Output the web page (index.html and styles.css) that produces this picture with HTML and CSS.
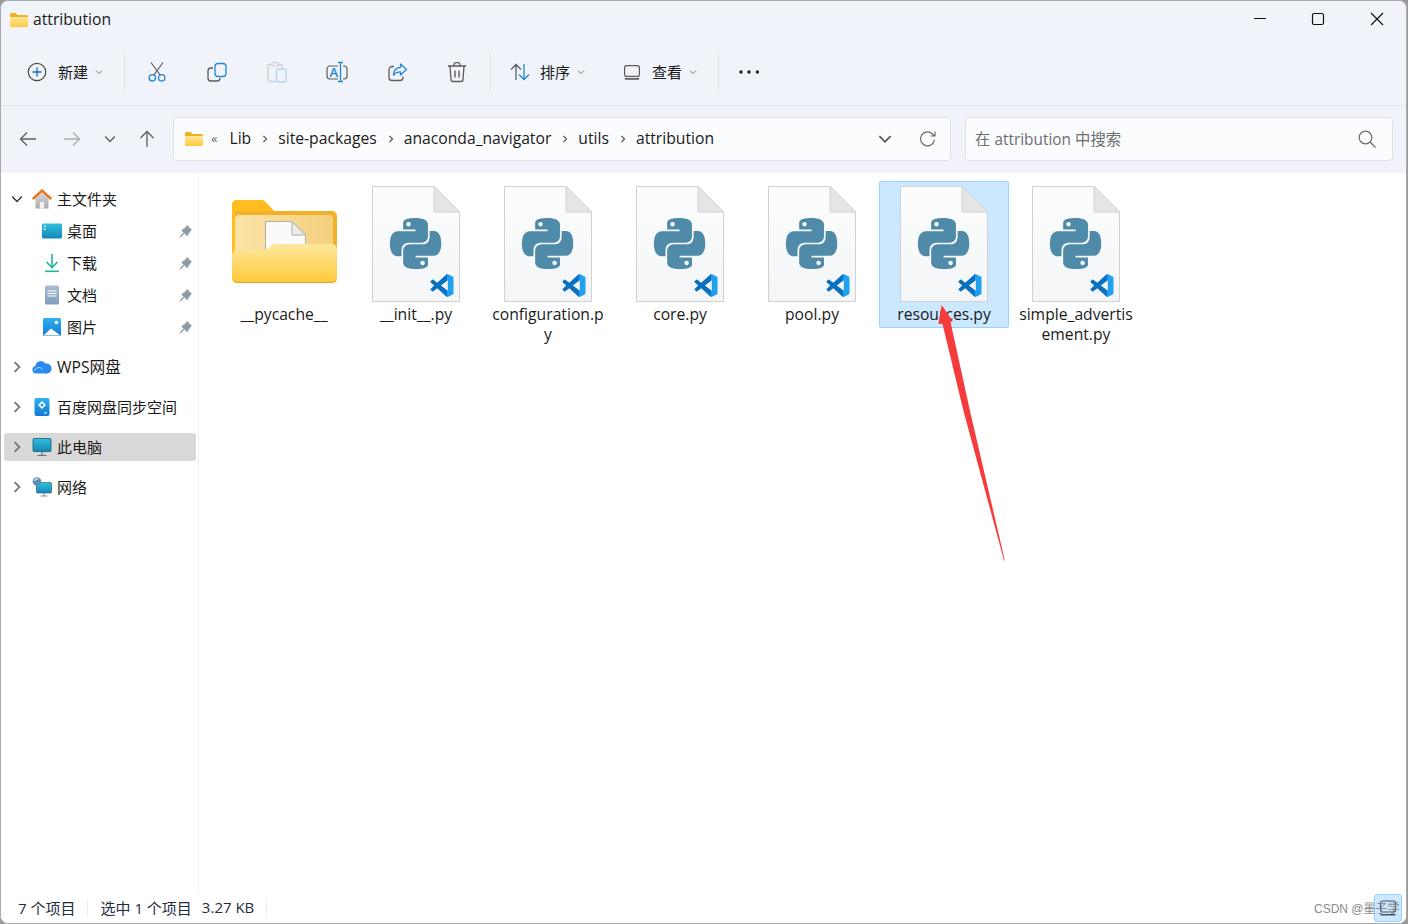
FILE: index.html
```html
<!DOCTYPE html>
<html lang="zh-CN">
<head>
<meta charset="utf-8">
<title>attribution</title>
<link rel="stylesheet" href="styles.css">
</head>
<body>
<svg class="defs" width="0" height="0" aria-hidden="true">
  <defs>
    <linearGradient id="fold-front" x1="0" y1="0" x2="0" y2="1"><stop offset="0" stop-color="#fde79f"/><stop offset="1" stop-color="#ffc937"/></linearGradient>
    <linearGradient id="fold-inner" x1="0" y1="0" x2="1" y2="0"><stop offset="0" stop-color="#fbe3a8"/><stop offset="1" stop-color="#f3d07e"/></linearGradient>
    <linearGradient id="page" x1="0" y1="0" x2="0" y2="1"><stop offset="0" stop-color="#fdfdfd"/><stop offset="1" stop-color="#f3f5f6"/></linearGradient>
    <linearGradient id="vs" x1="0" y1="0" x2="1" y2="0"><stop offset="0" stop-color="#0a6fbc"/><stop offset="0.7" stop-color="#0a72c2"/><stop offset="0.7" stop-color="#1f9ceb"/><stop offset="1" stop-color="#22a5f0"/></linearGradient>
    <linearGradient id="tealg" x1="0" y1="0" x2="0" y2="1"><stop offset="0" stop-color="#2fc0dd"/><stop offset="1" stop-color="#1488b8"/></linearGradient>
    <linearGradient id="blueg" x1="0" y1="0" x2="0" y2="1"><stop offset="0" stop-color="#2db2ef"/><stop offset="1" stop-color="#1279d6"/></linearGradient>
    <linearGradient id="docg" x1="0" y1="0" x2="0" y2="1"><stop offset="0" stop-color="#a9bed6"/><stop offset="1" stop-color="#7f9cc0"/></linearGradient>
    <linearGradient id="homeg" x1="0" y1="0" x2="0" y2="1"><stop offset="0" stop-color="#dcdcdc"/><stop offset="1" stop-color="#a9a9a9"/></linearGradient>
    <symbol id="chev-r" viewBox="0 0 10 10"><path d="M3 1l4 4-4 4" fill="none" stroke="currentColor" stroke-width="1.500"/></symbol>
    <symbol id="chev-d" viewBox="0 0 10 10"><path d="M1 3l4 4 4-4" fill="none" stroke="currentColor" stroke-width="1.200"/></symbol>
    <symbol id="pin" viewBox="0 0 14 14"><path d="M8 1l5 5-1.500 1-1.700 2.500-.3 1.500L8 12 2.500 6.500 3.500 5 5 4.700l2-2.200z" fill="#8f9ba5"/><path d="M1 13l4.500-4.500" stroke="#8f9ba5" stroke-width="1.300"/></symbol>
    <symbol id="mini-folder" viewBox="0 0 18 14"><path d="M0 1.500A1.500 1.500 0 0 1 1.500 0h4L7.500 2H16.500A1.500 1.500 0 0 1 18 3.500V5H0z" fill="#f6b01e"/><path d="M0 4h18v8.500a1.500 1.500 0 0 1-1.500 1.500h-15A1.500 1.500 0 0 1 0 12.500z" fill="url(#fold-front)"/></symbol>
    <symbol id="py-file" viewBox="0 0 88 116">
      <path d="M.5.500H62L87.500 26V115.500H.5z" fill="url(#page)" stroke="#cfd2d4"/>
      <path d="M62 .5L87.500 26H62z" fill="#e4e5e6" stroke="#cfd2d4"/>
      <g transform="translate(18 32) scale(2.130)"><path fill="#4f8aa8" fill-rule="evenodd" d="M14.250.18l.9.2.73.26.59.3.45.32.34.34.25.34.16.33.1.3.04.26.02.2-.01.13V8.500l-.05.63-.13.55-.21.46-.26.38-.3.31-.33.25-.35.19-.35.14-.33.1-.3.07-.26.04-.21.02H8.770l-.69.05-.59.14-.5.22-.41.27-.33.32-.27.35-.2.36-.15.37-.1.35-.07.32-.04.27-.02.21v3.060H3.170l-.21-.03-.28-.07-.32-.12-.35-.18-.36-.26-.36-.36-.35-.46-.32-.59-.28-.73-.21-.88-.14-1.050-.05-1.230.06-1.220.16-1.040.24-.87.32-.71.36-.57.4-.44.42-.33.42-.24.4-.16.36-.1.32-.05.24-.01h.16l.06.01h8.160v-.83H6.180l-.01-2.750-.02-.37.05-.34.11-.31.17-.28.25-.26.31-.23.38-.2.44-.18.51-.15.58-.12.64-.1.71-.06.77-.04.84-.02 1.270.05zm-6.300 1.980l-.23.33-.08.41.08.41.23.34.33.22.41.09.41-.09.33-.22.23-.34.08-.41-.08-.41-.23-.33-.33-.22-.41-.09-.41.09zm13.090 3.950l.28.06.32.12.35.18.36.27.36.35.35.47.32.59.28.73.21.88.14 1.040.05 1.230-.06 1.230-.16 1.040-.24.86-.32.71-.36.57-.4.45-.42.33-.42.24-.4.16-.36.09-.32.05-.24.02-.16-.01h-8.220v.82h5.840l.01 2.760.02.36-.05.34-.11.31-.17.29-.25.25-.31.24-.38.2-.44.17-.51.15-.58.13-.64.09-.71.07-.77.04-.84.01-1.270-.04-1.070-.14-.9-.2-.73-.25-.59-.3-.45-.33-.34-.34-.25-.34-.16-.33-.1-.3-.04-.25-.02-.2.01-.13v-5.340l.05-.64.13-.54.21-.46.26-.38.3-.32.33-.24.35-.2.35-.14.33-.1.3-.06.26-.04.21-.02.13-.01h5.840l.69-.05.59-.14.5-.21.41-.28.33-.32.27-.35.2-.36.15-.36.1-.35.07-.32.04-.28.02-.21V6.070h2.090l.14.01zm-6.470 14.250l-.23.33-.08.41.08.41.23.33.33.23.41.08.41-.08.33-.23.23-.33.08-.41-.08-.41-.23-.33-.33-.23-.41-.08-.41.08z"/></g>
      <g transform="translate(58.500 88) scale(.96)"><path fill="url(#vs)" d="M23.150 2.587L18.210.21a1.494 1.494 0 0 0-1.705.29l-9.460 8.630-4.120-3.128a.999.999 0 0 0-1.276.057L.327 7.261A1 1 0 0 0 .326 8.740L3.899 12 .326 15.260a1 1 0 0 0 .001 1.479L1.650 17.940a.999.999 0 0 0 1.276.057l4.120-3.128 9.460 8.630a1.492 1.492 0 0 0 1.704.29l4.942-2.377A1.500 1.500 0 0 0 24 20.060V3.939a1.500 1.500 0 0 0-.85-1.352zm-5.146 14.861L10.826 12l7.178-5.448v10.896z"/></g>
    </symbol>
  </defs>
</svg>

<div class="window">
  <header class="titlebar">
    <svg class="title-folder" width="18" height="14"><use href="#mini-folder"/></svg>
    <span class="title-text">attribution</span>
    <div class="win-controls">
      <button class="win-btn"><svg width="14" height="14" viewBox="0 0 14 14"><path d="M1 6.500h12" stroke="#111" stroke-width="1.200"/></svg></button>
      <button class="win-btn"><svg width="14" height="14" viewBox="0 0 14 14"><rect x="1.500" y="1.500" width="11" height="11" rx="1.800" fill="none" stroke="#111" stroke-width="1.200"/></svg></button>
      <button class="win-btn"><svg width="14" height="14" viewBox="0 0 14 14"><path d="M1 1l12 12M13 1L1 13" stroke="#111" stroke-width="1.200"/></svg></button>
    </div>
  </header>

  <div class="toolbar">
    <button class="menu-btn menu-new">
      <svg width="20" height="20" viewBox="0 0 20 20"><circle cx="10" cy="10" r="8.700" fill="none" stroke="#4a4a4a" stroke-width="1.200"/><path d="M10 5.500v9M5.500 10h9" stroke="#0f6cbd" stroke-width="1.300"/></svg>
      <span>新建</span>
      <svg class="menu-chev" width="8" height="8"><use href="#chev-d"/></svg>
    </button>
    <i class="tb-sep"></i>
    <div class="tb-group">
      <button class="tb-btn"><svg width="24" height="24" viewBox="0 0 24 24"><path d="M6 2.500l9.500 13M18 2.500L8.500 15.500" fill="none" stroke="#5c5c5c" stroke-width="1.200"/><circle cx="7.300" cy="17.800" r="3.200" fill="none" stroke="#1f86d8" stroke-width="1.300"/><circle cx="16.700" cy="17.800" r="3.200" fill="none" stroke="#1f86d8" stroke-width="1.300"/></svg></button>
      <button class="tb-btn"><svg width="24" height="24" viewBox="0 0 24 24"><path d="M8 8H6a3 3 0 0 0-3 3v7a3 3 0 0 0 3 3h6a3 3 0 0 0 3-3" fill="none" stroke="#5c5c5c" stroke-width="1.300"/><rect x="10" y="3.500" width="11" height="13" rx="3" fill="none" stroke="#1f86d8" stroke-width="1.300"/></svg></button>
      <button class="tb-btn"><svg width="24" height="24" viewBox="0 0 24 24"><path d="M7 4.500H5a2 2 0 0 0-2 2v13a2 2 0 0 0 2 2h6M13 4.500h2a2 2 0 0 1 2 2V8" fill="none" stroke="#cdd0d3" stroke-width="1.300"/><rect x="7" y="2.500" width="6" height="3.500" rx="1" fill="none" stroke="#cdd0d3" stroke-width="1.200"/><rect x="11.500" y="9" width="9.500" height="13" rx="2" fill="none" stroke="#b3d4f0" stroke-width="1.300"/></svg></button>
      <button class="tb-btn"><svg width="24" height="24" viewBox="0 0 24 24"><path d="M13 6H5a3 3 0 0 0-3 3v7a3 3 0 0 0 3 3h8M18 6h1a3 3 0 0 1 3 3v7a3 3 0 0 1-3 3h-1" fill="none" stroke="#5c5c5c" stroke-width="1.200"/><path d="M13 2.500h5M15.500 2.500v19M13 21.500h5" fill="none" stroke="#1f86d8" stroke-width="1.300"/><text class="rename-a" x="4.500" y="16.500">A</text></svg></button>
      <button class="tb-btn"><svg width="24" height="24" viewBox="0 0 24 24"><path d="M9 6.500H7a3 3 0 0 0-3 3v8a3 3 0 0 0 3 3h8a3 3 0 0 0 3-3v-1" fill="none" stroke="#5c5c5c" stroke-width="1.300"/><path d="M15.500 4l6 5.500-6 5.500v-3.200c-3.500 0-5.500 1-7 3.500 0-4.500 2.500-7.500 7-8z" fill="none" stroke="#1f86d8" stroke-width="1.300" stroke-linejoin="round"/></svg></button>
      <button class="tb-btn"><svg width="24" height="24" viewBox="0 0 24 24"><path d="M3 6h18M9 6V4.500A2 2 0 0 1 11 2.700h2a2 2 0 0 1 2 1.800V6M5 6l1 13.500a2 2 0 0 0 2 2h8a2 2 0 0 0 2-2L19 6" fill="none" stroke="#5c5c5c" stroke-width="1.300"/><path d="M10 10.500v7M14 10.500v7" stroke="#5c5c5c" stroke-width="1.400"/></svg></button>
    </div>
    <i class="tb-sep"></i>
    <button class="menu-btn menu-sort">
      <svg width="20" height="20" viewBox="0 0 20 20"><path d="M6 18V3M1 7.500L6 2.500l5 5" fill="none" stroke="#5c5c5c" stroke-width="1.300"/><path d="M14 2v15M9 12.500l5 5 5-5" fill="none" stroke="#1f86d8" stroke-width="1.300"/></svg>
      <span>排序</span>
      <svg class="menu-chev" width="8" height="8"><use href="#chev-d"/></svg>
    </button>
    <button class="menu-btn menu-view">
      <svg width="20" height="20" viewBox="0 0 20 20"><rect x="2.600" y="3.600" width="14.800" height="10.800" rx="2.200" fill="none" stroke="#5c5c5c" stroke-width="1.200"/><path d="M3 16.800h14" stroke="#5c5c5c" stroke-width="1.800"/></svg>
      <span>查看</span>
      <svg class="menu-chev" width="8" height="8"><use href="#chev-d"/></svg>
    </button>
    <i class="tb-sep"></i>
    <button class="tb-btn"><svg width="24" height="24" viewBox="0 0 24 24"><circle cx="4" cy="12" r="1.800" fill="#2a2a2a"/><circle cx="12" cy="12" r="1.800" fill="#2a2a2a"/><circle cx="20.400" cy="12" r="1.800" fill="#2a2a2a"/></svg></button>
  </div>

  <div class="navbar">
    <button class="nav-btn nav-back"><svg width="20" height="20" viewBox="0 0 20 20"><path d="M18 10H2.500M9 3.500L2.500 10 9 16.500" fill="none" stroke="#5f5f5f" stroke-width="1.300"/></svg></button>
    <button class="nav-btn nav-forward"><svg width="20" height="20" viewBox="0 0 20 20"><path d="M2 10h15.500M11 3.500l6.500 6.500-6.500 6.500" fill="none" stroke="#a9adb2" stroke-width="1.300"/></svg></button>
    <button class="nav-btn nav-recent"><svg width="12" height="12"><use href="#chev-d"/></svg></button>
    <button class="nav-btn nav-up"><svg width="20" height="20" viewBox="0 0 20 20"><path d="M10 18V2.500M3.500 9L10 2.500 16.500 9" fill="none" stroke="#5f5f5f" stroke-width="1.300"/></svg></button>
    <div class="address">
      <svg width="18" height="14"><use href="#mini-folder"/></svg>
      <span class="overflow">«</span>
      <span class="crumb">Lib</span>
      <svg class="crumb-chev" width="8" height="8"><use href="#chev-r"/></svg>
      <span class="crumb">site-packages</span>
      <svg class="crumb-chev" width="8" height="8"><use href="#chev-r"/></svg>
      <span class="crumb">anaconda_navigator</span>
      <svg class="crumb-chev" width="8" height="8"><use href="#chev-r"/></svg>
      <span class="crumb">utils</span>
      <svg class="crumb-chev" width="8" height="8"><use href="#chev-r"/></svg>
      <span class="crumb">attribution</span>
      <svg class="addr-drop" width="14" height="14"><use href="#chev-d"/></svg>
      <svg class="addr-refresh" width="20" height="20" viewBox="0 0 20 20"><path d="M16.500 10.500a7 7 0 1 1-2-5.500L16.500 7M17 2.500V7h-4.500" fill="none" stroke="#6b6b6b" stroke-width="1.200"/></svg>
    </div>
    <div class="search">
      <span class="search-text">在 attribution 中搜索</span>
      <svg width="20" height="20" viewBox="0 0 20 20"><circle cx="8.500" cy="8.500" r="6.300" fill="none" stroke="#6b6b6b" stroke-width="1.200"/><path d="M13 13l5.500 5.500" stroke="#6b6b6b" stroke-width="1.200"/></svg>
    </div>
  </div>

  <div class="main">
    <nav class="sidebar">
      <div class="side-group">
        <div class="side-row">
          <svg class="side-chev" width="12" height="12"><use href="#chev-d"/></svg>
          <svg class="side-icon" width="20" height="20" viewBox="0 0 20 20"><path d="M3.500 9L10 3l6.500 6v10.500h-13z" fill="url(#homeg)"/><path d="M7.800 19.500v-6.500h4.400v6.500z" fill="#f2f2f2"/><path d="M.800 10L10 1.500 19.200 10" fill="none" stroke="#e8761a" stroke-width="2.400"/></svg>
          <span class="side-label">主文件夹</span>
        </div>
        <div class="side-row side-sub">
          <svg class="side-icon" width="20" height="20" viewBox="0 0 20 20"><rect y="2.500" width="20" height="15" rx="1.500" fill="url(#tealg)"/><rect x="2" y="4.500" width="1.500" height="1.500" fill="#fff"/><rect x="2" y="7.500" width="1.500" height="1.500" fill="#fff"/></svg>
          <span class="side-label">桌面</span>
          <svg class="side-pin" width="14" height="14"><use href="#pin"/></svg>
        </div>
        <div class="side-row side-sub">
          <svg class="side-icon" width="20" height="20" viewBox="0 0 20 20"><path d="M10 1v13M4.500 9l5.500 5.500L15.500 9" fill="none" stroke="#21b59a" stroke-width="1.600"/><path d="M3 18.300h14" stroke="#21b59a" stroke-width="1.600"/></svg>
          <span class="side-label">下载</span>
          <svg class="side-pin" width="14" height="14"><use href="#pin"/></svg>
        </div>
        <div class="side-row side-sub">
          <svg class="side-icon" width="20" height="20" viewBox="0 0 20 20"><rect x="3" y="0.500" width="14" height="19" rx="1.500" fill="url(#docg)"/><path d="M5.500 6h9M5.500 8.500h9M5.500 11h9" stroke="#fff" stroke-width="1.100"/></svg>
          <span class="side-label">文档</span>
          <svg class="side-pin" width="14" height="14"><use href="#pin"/></svg>
        </div>
        <div class="side-row side-sub">
          <svg class="side-icon" width="20" height="20" viewBox="0 0 20 20"><rect x="1" y="1" width="18" height="18" rx="1.500" fill="url(#blueg)"/><path d="M1.500 18.500l7.500-7 9.500 7z" fill="#fff"/><circle cx="14.500" cy="5.500" r="1.700" fill="#fff"/></svg>
          <span class="side-label">图片</span>
          <svg class="side-pin" width="14" height="14"><use href="#pin"/></svg>
        </div>
      </div>
      <div class="side-group">
        <div class="side-row">
          <svg class="side-chev side-chev-r" width="12" height="12"><use href="#chev-r"/></svg>
          <svg class="side-icon" width="20" height="20" viewBox="0 0 20 20"><path d="M4 16.500a3.800 3.800 0 0 1-.6-7.500A5.500 5.500 0 0 1 13.500 6.500a5 5 0 1 1 2 10z" fill="#2a8bee"/><path d="M2.500 13.500c2-3.500 6-4 8-1" fill="none" stroke="#bfe0ff" stroke-width="1"/></svg>
          <span class="side-label side-latin">WPS网盘</span>
        </div>
      </div>
      <div class="side-group">
        <div class="side-row">
          <svg class="side-chev side-chev-r" width="12" height="12"><use href="#chev-r"/></svg>
          <svg class="side-icon" width="20" height="20" viewBox="0 0 20 20"><rect x="2.500" y="1" width="15" height="18" rx="2" fill="url(#blueg)"/><path d="M10 4l4 4-4 4-4-4zM10 6.200L8.200 8 10 9.800 11.800 8z" fill="#fff" fill-rule="evenodd"/><path d="M12 16h3" stroke="#fff" stroke-width="1"/></svg>
          <span class="side-label">百度网盘同步空间</span>
        </div>
      </div>
      <div class="side-group">
        <div class="side-row side-active">
          <svg class="side-chev side-chev-r" width="12" height="12"><use href="#chev-r"/></svg>
          <svg class="side-icon" width="20" height="20" viewBox="0 0 20 20"><rect x="1" y="1.500" width="18" height="13" rx="1" fill="url(#tealg)" stroke="#25566f" stroke-width=".8"/><path d="M10 14.500v3.500M5.500 18.500h9" stroke="#5b7688" stroke-width="1.200"/></svg>
          <span class="side-label">此电脑</span>
        </div>
      </div>
      <div class="side-group">
        <div class="side-row">
          <svg class="side-chev side-chev-r" width="12" height="12"><use href="#chev-r"/></svg>
          <svg class="side-icon" width="20" height="20" viewBox="0 0 20 20"><rect x="4.500" y="5.500" width="15" height="10.500" rx="1" fill="url(#tealg)" stroke="#25566f" stroke-width=".6"/><path d="M12 16v2.500M8.500 19h7" stroke="#7f97a6" stroke-width="1.200"/><circle cx="5" cy="4.500" r="4.300" fill="#5f8bb0"/><path d="M2.500 4a3 3 0 0 1 4-2" fill="none" stroke="#cfe0ee" stroke-width="1.200"/></svg>
          <span class="side-label">网络</span>
        </div>
      </div>
    </nav>

    <section class="files">
      <div class="tile">
        <svg class="tile-icon" width="105" height="116" viewBox="0 0 105 116">
          <path d="M0 19A5 5 0 0 1 5 14H29a6 6 0 0 1 4.500 2L42 25H100a5 5 0 0 1 5 5V75H0z" fill="#f2b128"/>
          <path d="M0 19A5 5 0 0 1 5 14H29a6 6 0 0 1 4.500 2L42 25H3v45H0z" fill="#ffbd1f"/>
          <path d="M3 33a4 4 0 0 1 4-4H97a4 4 0 0 1 4 4V70H3z" fill="url(#fold-inner)"/>
          <path d="M33.500 35.500H60L73.500 49V70H33.500z" fill="#fafafa" stroke="#b5b0a4"/>
          <path d="M60 35.500L73.500 49H60z" fill="#ececec" stroke="#b5b0a4"/>
          <path d="M0 69a5 5 0 0 1 5-5H32c3 0 4-1 6-3s3-3 6-3H100a5 5 0 0 1 5 5V92a5 5 0 0 1-5 5H5a5 5 0 0 1-5-5z" fill="url(#fold-front)"/>
          <path d="M0 91a5 5 0 0 0 5 5H100a5 5 0 0 0 5-5v1a5 5 0 0 1-5 5H5a5 5 0 0 1-5-5z" fill="#e2a52c"/>
        </svg>
        <div class="tile-name">__pycache__</div>
      </div>
      <div class="tile">
        <svg class="tile-icon" width="88" height="116"><use href="#py-file"/></svg>
        <div class="tile-name">__init__.py</div>
      </div>
      <div class="tile">
        <svg class="tile-icon" width="88" height="116"><use href="#py-file"/></svg>
        <div class="tile-name">configuration.p<br>y</div>
      </div>
      <div class="tile">
        <svg class="tile-icon" width="88" height="116"><use href="#py-file"/></svg>
        <div class="tile-name">core.py</div>
      </div>
      <div class="tile">
        <svg class="tile-icon" width="88" height="116"><use href="#py-file"/></svg>
        <div class="tile-name">pool.py</div>
      </div>
      <div class="tile tile-selected">
        <svg class="tile-icon" width="88" height="116"><use href="#py-file"/></svg>
        <div class="tile-name">resources.py</div>
      </div>
      <div class="tile">
        <svg class="tile-icon" width="88" height="116"><use href="#py-file"/></svg>
        <div class="tile-name">simple_advertis<br>ement.py</div>
      </div>
    </section>
  </div>

  <footer class="status">
    <span class="status-text">7 个项目</span>
    <i class="status-sep status-sep-a"></i>
    <span class="status-text">选中 1 个项目</span>
    <span class="status-text status-size">3.27 KB</span>
    <i class="status-sep status-sep-b"></i>
    <button class="view-toggle"><svg width="20" height="20" viewBox="0 0 20 20"><rect x="2.500" y="3" width="15" height="11" rx="2" fill="none" stroke="#4b5560" stroke-width="1.200"/><path d="M2.500 16.800h15" stroke="#4b5560" stroke-width="1.600"/></svg></button>
  </footer>

  <svg class="annotation" width="80" height="270" viewBox="0 0 80 270"><path d="M12.700 9L23.700 25 21.500 26 41 115 75.800 264.500H75L34.500 115 13.500 28 9.300 27.700z" fill="#f53b3b"/></svg>
  <span class="watermark">CSDN @墨子学</span>
</div>
</body>
</html>
```
FILE: styles.css
```css
* { box-sizing: border-box; }
html, body { margin: 0; height: 100%; }
body {
  background: #9a9a9a;
  font-family: "Open Sans", "Noto Sans CJK SC", sans-serif;
  font-size: 15px;
  color: #1a1a1a;
}
button { border: 0; background: none; padding: 0; font: inherit; color: inherit; }
svg { display: block; flex: none; }
.defs { position: absolute; }

.window {
  position: relative;
  display: flex;
  flex-direction: column;
  width: 1407px;
  height: 924px;
  background: #fff;
  border: 1px solid #ababab;
  border-radius: 8px;
  overflow: hidden;
}

.titlebar {
  display: flex;
  align-items: center;
  height: 37px;
  padding-left: 9px;
  background: #f0f3f9;
}
.title-text { margin-left: 5px; padding-bottom: 2px; font-size: 15.7px; }
.win-controls { display: flex; align-self: flex-start; margin-left: auto; }
.win-btn { display: flex; align-items: center; justify-content: center; width: 58.5px; height: 36px; }

.toolbar {
  display: flex;
  align-items: center;
  height: 68px;
  padding-left: 16px;
  background: #f0f3f9;
  border-bottom: 1px solid #e0e3e8;
}
.tb-sep { flex: none; width: 1px; height: 40px; background: #e1e3e7; }
.tb-group { display: flex; padding: 0 3px 0 2px; }
.tb-btn { display: flex; align-items: center; justify-content: center; width: 60px; height: 40px; }
.rename-a { font: 600 13px "Open Sans", sans-serif; fill: #1f86d8; }
.menu-btn { display: flex; align-items: center; height: 40px; font-size: 15px; }
.menu-btn span { margin-left: 10px; }
.menu-chev { margin-left: 7px; color: #777; }
.menu-new { width: 107px; padding-left: 10px; }
.menu-new span { margin-left: 11px; }
.menu-sort { width: 114px; padding-left: 19px; }
.menu-view { width: 113px; padding-left: 17px; }

.navbar {
  display: flex;
  align-items: flex-start;
  height: 67px;
  padding: 11px 13px 0 7px;
  background: #f0f3f9;
}
.nav-btn { display: flex; align-items: center; justify-content: center; height: 44px; }
.nav-back { width: 40px; }
.nav-forward { width: 40px; margin-left: 4px; }
.nav-recent { width: 36px; color: #5f5f5f; }
.nav-up { width: 38px; margin-right: 7px; }
.address, .search {
  display: flex;
  align-items: center;
  height: 44px;
  background: #fbfcfe;
  border: 1px solid #dfe1e6;
  border-radius: 4px;
}
.address { flex: 1; margin-right: 14px; padding-left: 11px; }
.overflow { margin: 0 12px 0 8px; padding-bottom: 2px; color: #666; font-size: 13px; }
.crumb { padding-bottom: 2px; font-size: 15.7px; white-space: nowrap; }
.crumb-chev { margin: 0 9px 0 10px; color: #555; }
.addr-drop { margin-left: auto; color: #555; }
.addr-refresh { margin: 0 12px 0 26px; }
.search { width: 428px; padding: 0 15px 0 9px; justify-content: space-between; }
.search-text { padding-bottom: 2px; font-size: 15.4px; color: #6e6e6e; }

.main { flex: 1; display: flex; min-height: 0; }
.sidebar {
  display: flex;
  flex-direction: column;
  gap: 12px;
  width: 198px;
  padding: 12px 2px 0 3px;
  border-right: 1px solid #f0f0f0;
}
.side-group { display: flex; flex-direction: column; gap: 4px; }
.side-row { display: flex; align-items: center; height: 28px; padding-right: 3px; border-radius: 3px; }
.side-sub { padding-left: 38px; }
.side-chev { margin: 0 9px 0 7px; color: #333; }
.side-chev-r { color: #777; }
.side-icon { margin: 0 5px 0 0; }
.side-label { padding-bottom: 2px; }
.side-latin { font-size: 15.7px; }
.side-pin { margin-left: auto; }
.side-active { background: #d9d9d9; }

.files {
  flex: 1;
  display: flex;
  flex-wrap: wrap;
  align-content: flex-start;
  align-items: flex-start;
  gap: 2px;
  padding: 8px 0 0 20px;
}
.tile {
  display: flex;
  flex-direction: column;
  align-items: center;
  width: 130px;
  padding: 4px 4px 3px;
  border: 1px solid transparent;
  border-radius: 2px;
}
.tile-name { margin-top: 2px; font-size: 15.7px; line-height: 20px; text-align: center; white-space: nowrap; }
.tile-selected { background: #cce8ff; border-color: #99d1ff; }

.status {
  display: flex;
  align-items: center;
  height: 30px;
  padding: 0 4px 0 17px;
  background: #fff;
  color: #1f2d3d;
}
.status-text { padding-bottom: 2px; }
.status-sep { flex: none; width: 1px; height: 18px; background: #ececec; }
.status-sep-a { margin: 0 12px; }
.status-sep-b { margin-left: 12px; }
.status-size { margin-left: 10px; }
.view-toggle {
  display: flex;
  align-items: center;
  justify-content: center;
  width: 28px;
  height: 28px;
  margin-left: auto;
  background: #cce8ff;
  border: 1px solid #99d1ff;
  border-radius: 3px;
}

.annotation { position: absolute; left: 928px; top: 295px; }
.watermark {
  position: absolute;
  left: 1313px;
  top: 899px;
  font-size: 12px;
  line-height: 18px;
  font-family: "Liberation Sans", "Noto Sans CJK SC", sans-serif;
  color: #8a8a8a;
  white-space: nowrap;
}
```
